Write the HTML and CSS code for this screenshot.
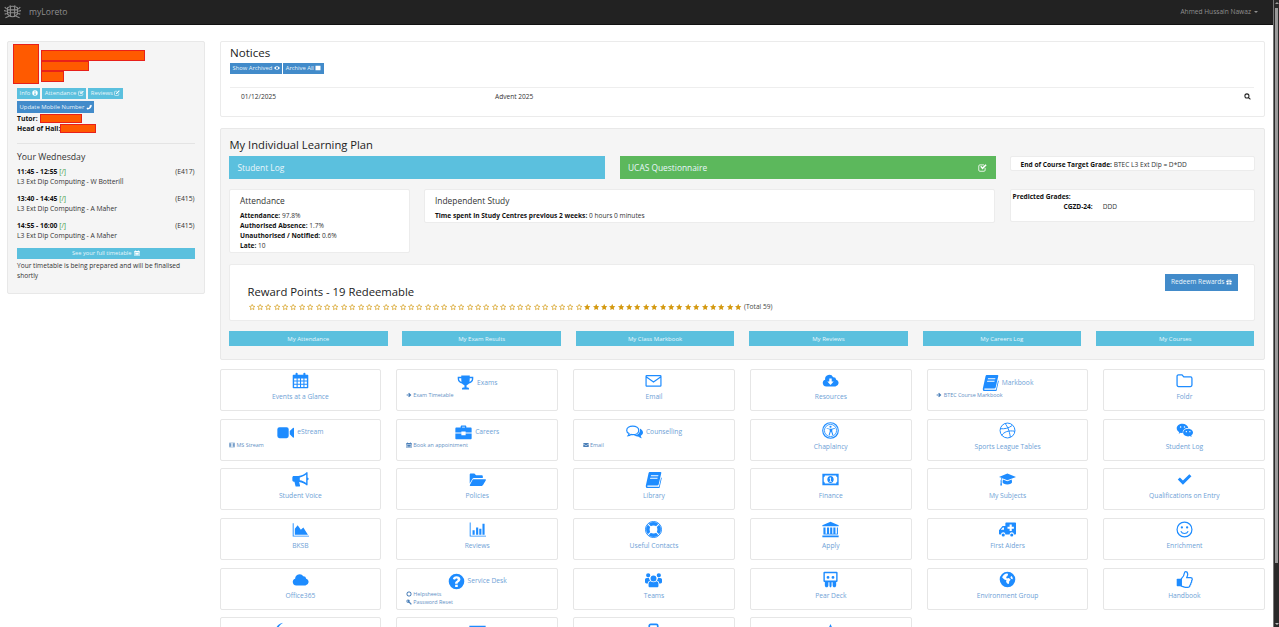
FILE: index.html
```html
<!DOCTYPE html>
<html lang="en">
<head>
<meta charset="utf-8">
<title>myLoreto</title>
<link rel="stylesheet" href="styles.css">
</head>
<body>
<svg class="sprite" aria-hidden="true">
<defs>
<symbol id="i-calendar" viewBox="0 0 24 24"><path fill="currentColor" fill-rule="evenodd" d="M2 4h3V2.5a1.5 1.5 0 0 1 3 0V4h8V2.500a1.500 1.500 0 0 1 3 0V4h3a1 1 0 0 1 1 1v17a1 1 0 0 1-1 1H2a1 1 0 0 1-1-1V5a1 1 0 0 1 1-1zM3 9v3h3.500V9zm5 0v3h3.300V9zm4.800 0v3h3.300V9zm4.800 0v3H21V9zM3 13.500v3h3.500v-3zm5 0v3h3.300v-3zm4.800 0v3h3.300v-3zm4.800 0v3H21v-3zM3 18v3h3.500v-3zm5 0v3h3.300v-3zm4.800 0v3h3.300v-3zm4.800 0v3H21v-3z"/></symbol>
<symbol id="i-trophy" viewBox="0 0 24 24"><path fill="currentColor" fill-rule="evenodd" d="M6 2h12v2h5v3c0 3.500-3 6-6 6.300-.8 1.200-2 2.100-3.500 2.500V19H15c1.100 0 2 .8 2 2v1H7v-1c0-1.200.9-2 2-2h1.500v-3.200C9 15.400 7.800 14.500 7 13.300 4 13 1 10.500 1 7V4h5zM3 6v1c0 2 1.500 3.600 3.500 4.100C6.200 10 6 8 6 6zm15 0c0 2-.2 4-.5 5.100C19.500 10.600 21 9 21 7V6z"/></symbol>
<symbol id="i-envelope" viewBox="0 0 24 24"><path fill="none" stroke="currentColor" stroke-width="1.700" d="M2.500 5h19a1 1 0 0 1 1 1v13a1 1 0 0 1-1 1h-19a1 1 0 0 1-1-1V6a1 1 0 0 1 1-1zM2 7l10 7 10-7"/></symbol>
<symbol id="i-cloud-down" viewBox="0 0 24 24"><path fill="currentColor" fill-rule="evenodd" d="M6 20.500a5 5 0 0 1-1.600-9.700A6 6 0 0 1 15.700 7.300 4 4 0 0 1 20 10.800a5 5 0 0 1-1 9.700zM10.300 9v4.500H7.500l4.500 5 4.500-5h-2.800V9z"/></symbol>
<symbol id="i-book" viewBox="0 0 24 24"><path fill="currentColor" fill-rule="evenodd" d="M7 1.500h15c.8 0 1.200.6 1 1.300L19.300 19c-.3 1-1 1.500-2 1.500H4c-.7 0-1 .4-1 .8s.4.900 1.200.900h15.500l3-13 1 .8-3 13c-.2.900-.9 1.500-1.800 1.500H4C2 24.500 .8 23 1.200 20.500L5 3c.2-.9 1-1.500 2-1.500zM8.500 6l-.4 1.500h10.500L19 6zm-1 3.500L7 11h10.500l.4-1.500z"/></symbol>
<symbol id="i-folder" viewBox="0 0 24 24"><path fill="none" stroke="currentColor" stroke-width="1.800" d="M3.500 4h5l2.500 3h9.500a2 2 0 0 1 2 2v9.500a2 2 0 0 1-2 2h-17a2 2 0 0 1-2-2v-12.500a2 2 0 0 1 2-2z"/></symbol>
<symbol id="i-video" viewBox="0 0 24 24"><path fill="currentColor" d="M3.500 4.500h10a3 3 0 0 1 3 3V17a3 3 0 0 1-3 3h-10a3 3 0 0 1-3-3V7.500a3 3 0 0 1 3-3zM18 10l4.500-4.500c.5-.5 1.500-.2 1.500.6v12.300c0 .8-1 1.100-1.500.6L18 14.500z"/></symbol>
<symbol id="i-briefcase" viewBox="0 0 24 24"><path fill="currentColor" fill-rule="evenodd" d="M8 5V3.500C8 2.700 8.700 2 9.500 2h5c.8 0 1.500.7 1.500 1.500V5h6c.9 0 1.500.7 1.500 1.500V12H15v-1.500H9V12H.5V6.500C.500 5.700 1.100 5 2 5zm2 0h4V4h-4zM.5 13.500H9V16h6v-2.500h8.500V20c0 .8-.7 1.500-1.500 1.500H2c-.9 0-1.500-.7-1.500-1.500z"/></symbol>
<symbol id="i-comments" viewBox="0 0 24 24"><path fill="none" stroke="currentColor" stroke-width="1.700" d="M9.500 3c4.700 0 8.500 2.500 8.500 6s-3.800 6-8.500 6c-.9 0-1.700-.1-2.500-.3-1.200.9-2.500 1.600-4 1.800.7-.9 1.200-1.900 1.300-3C2.200 12.400 1 10.800 1 9c0-3.500 3.800-6 8.500-6z"/><path fill="currentColor" d="M19.500 6.500C22 7.800 24 9.500 24 12c0 1.800-1.200 3.400-3.200 4.500.1 1.100.6 2.300 1.700 3.500-2.200-.2-4-1.200-5.300-2.400-2.500.3-4.700-.4-6.200-1.600 4.500.1 10-2.500 8.500-9.500z"/></symbol>
<symbol id="i-access" viewBox="0 0 24 24"><circle cx="12" cy="12" r="11" fill="none" stroke="currentColor" stroke-width="1.600"/><circle cx="12" cy="12" r="8.600" fill="none" stroke="currentColor" stroke-width="1.200"/><circle cx="12" cy="6.700" r="1.500" fill="currentColor"/><path fill="currentColor" d="M6 8.500l4.300 1h3.400l4.300-1 .3 1.200-3.800 1v2.800l1.500 5-1.200.4-1.800-5h-.6l-1.800 5-1.200-.4 1.500-5v-2.800l-3.800-1z"/></symbol>
<symbol id="i-ball" viewBox="0 0 24 24"><g fill="none" stroke="currentColor" stroke-width="1.400"><circle cx="12" cy="12" r="10.500"/><path d="M8.500 2.200c3.500 4 6 9.500 7.500 19M2 9.500c6 .5 12-.8 16.500-4.500M3.800 19C7 14 13 11.500 22.400 13"/></g></symbol>
<symbol id="i-wechat" viewBox="0 0 24 24"><path fill="currentColor" fill-rule="evenodd" d="M9 2.500c4.200 0 7.700 2.500 8.300 5.800C13 8.200 9 11 9.500 15.500c-1 0-1.800-.1-2.700-.4l-3 1.600.8-2.500C2.500 13 1 11 1 8.700 1 5.300 4.600 2.500 9 2.500zM6.500 6a1.100 1.100 0 1 0 0 2.200 1.100 1.100 0 0 0 0-2.200zm5.500 0a1.100 1.100 0 1 0 0 2.200A1.100 1.100 0 0 0 12 6z"/><path fill="currentColor" fill-rule="evenodd" d="M17 9.500c3.800 0 7 2.400 7 5.300 0 1.700-1 3.100-2.500 4.200l.6 2.200-2.500-1.300c-.8.200-1.700.4-2.600.4-3.800 0-7-2.400-7-5.500s3.200-5.300 7-5.300zm-2.400 3.100a1 1 0 1 0 0 2 1 1 0 0 0 0-2zm5 0a1 1 0 1 0 0 2 1 1 0 0 0 0-2z"/></symbol>
<symbol id="i-bullhorn" viewBox="0 0 24 24"><path fill="currentColor" fill-rule="evenodd" d="M21 1.500c.6 0 1 .5 1 1V9c1 .3 1.500 1 1.500 2s-.5 1.700-1.500 2v6.500c0 .5-.4 1-1 1-3-2.700-7-4.500-11-5l1.300 5c.2.800-.2 1.500-1 1.500H6c-.6 0-1-.4-1.100-.9L3.500 15H2.500C1.400 15 .5 14 .5 13V9c0-1 .9-2 2-2H9c4.500 0 9-2.500 12-5.500zM20 5c-2.500 2-5.800 3.500-9 4v4c3.200.4 6.500 2 9 4z"/></symbol>
<symbol id="i-folder-open" viewBox="0 0 24 24"><path fill="currentColor" d="M1 17.500V5c0-.8.7-1.500 1.500-1.500h5L10 6h8c.8 0 1.500.7 1.500 1.500V10H7c-1 0-1.800.5-2.300 1.300zM6.200 11.500H23c.8 0 1.200.7.800 1.400l-4 7c-.4.700-1.100 1.100-1.800 1.100H2c-.8 0-1.200-.8-.8-1.400l3.700-7c.3-.7.800-1.100 1.300-1.100z"/></symbol>
<symbol id="i-money" viewBox="0 0 24 24"><path fill="currentColor" fill-rule="evenodd" d="M.5 4h23v16H.5zM4 6.500c0 1.400-.8 2.200-1.500 2.200v6.600c.7 0 1.500.8 1.500 2.200h16c0-1.400.8-2.200 1.500-2.200V8.700c-.7 0-1.500-.8-1.500-2.200zM12 7c2.800 0 4.500 2.300 4.500 5s-1.700 5-4.500 5-4.500-2.300-4.500-5 1.700-5 4.500-5zm-1.500 2.800v1l1-.2v3.400h-1v1h3.200v-1h-1V9h-1z"/></symbol>
<symbol id="i-cap" viewBox="0 0 24 24"><path fill="currentColor" d="M11.800 3.500L24 8.300l-12.200 4.800L4.500 10.200c-.6.800-1 2-1 3.100.4.200.6.500.6.900 0 .3-.2.600-.4.800l.6 5.500H1.800l.6-5.500c-.3-.2-.4-.5-.4-.8 0-.4.200-.8.600-1 0-1.400.4-2.700 1-3.600L0 8.300zM5.500 12l6.300 2.400 6.200-2.400.4 4c0 1.500-3 3-6.600 3S5 17.500 5 16z"/></symbol>
<symbol id="i-check" viewBox="0 0 24 24"><path fill="currentColor" d="M2.500 12l3-3 4.300 4.300L18.800 4.500l3 3L9.800 19.500z"/></symbol>
<symbol id="i-area" viewBox="0 0 24 24"><path fill="currentColor" d="M1 3h1.300v17.700H24V22H1zM4 19.500V11l4-5 4.500 6.500L16 9l6.500 10.500z"/></symbol>
<symbol id="i-bars" viewBox="0 0 24 24"><path fill="currentColor" d="M1 2h1.300v18.700H24V22H1zM5 13h3v6.500H5zM10 9h3v10.500h-3zM14.500 11h3v8.500h-3zM19 4h3v15.500h-3z"/></symbol>
<symbol id="i-ring" viewBox="0 0 24 24"><circle cx="12" cy="12" r="8" fill="none" stroke="currentColor" stroke-width="5"/><path stroke="#fff" stroke-width="1.500" d="M4.300 4.300l4.200 4.200M19.700 4.300l-4.200 4.200M4.300 19.700l4.200-4.200M19.700 19.700l-4.200-4.200"/><circle cx="12" cy="12" r="11.300" fill="none" stroke="currentColor" stroke-width="1.400"/></symbol>
<symbol id="i-bank" viewBox="0 0 24 24"><path fill="currentColor" d="M12 1l11.500 5v1.500h-23V6zM2 9h3v9H7V9h3v9h1.500V9h3v9h1.500V9h3v9h2V9h1.500v10H2zM.5 20.500h23V23H.5z"/></symbol>
<symbol id="i-ambulance" viewBox="0 0 24 24"><path fill="currentColor" fill-rule="evenodd" d="M10 2h13c.6 0 1 .4 1 1v15c0 .6-.4 1-1 1h-2c0-1.700-1.300-3-3-3s-3 1.300-3 3H9c0-1.700-1.300-3-3-3s-3 1.300-3 3H1c-.6 0-1-.4-1-1v-5l5-6h4V3c0-.6.400-1 1-1zM15 5v3h-3v3h3v3h3v-3h3V8h-3V5zM5.500 9L2.500 12.500H7V9zM6 17.500a2.200 2.200 0 1 1 0 4.400 2.200 2.200 0 0 1 0-4.400zm12 0a2.200 2.200 0 1 1 0 4.400 2.200 2.200 0 0 1 0-4.400z"/></symbol>
<symbol id="i-smile" viewBox="0 0 24 24"><circle cx="12" cy="12" r="10.500" fill="none" stroke="currentColor" stroke-width="1.700"/><circle cx="8.300" cy="9" r="1.600" fill="currentColor"/><circle cx="15.700" cy="9" r="1.600" fill="currentColor"/><path fill="none" stroke="currentColor" stroke-width="1.600" d="M6.800 14.500c1 2 3 3.200 5.200 3.200s4.200-1.200 5.200-3.200"/></symbol>
<symbol id="i-cloud" viewBox="0 0 24 24"><path fill="currentColor" d="M6 20.500a5 5 0 0 1-1.600-9.700A6.500 6.500 0 0 1 16 7.300a4 4 0 0 1 4 3.500 5 5 0 0 1-1 9.700z"/></symbol>
<symbol id="i-question" viewBox="0 0 24 24"><path fill="currentColor" fill-rule="evenodd" d="M12 1a11 11 0 1 1 0 22 11 11 0 0 1 0-22zm-1.900 15.500v3.300h3.700v-3.300zM12 4.500c-3 0-4.700 1.500-5.200 4l3.100 1.100c.3-1.200 1-2 2-2 1.100 0 1.800.7 1.800 1.500 0 1-.8 1.500-1.800 2.200-1.200.9-1.900 1.800-1.900 3.300v.4h3.600c0-1 .4-1.400 1.500-2.200 1.400-1 2.400-2.100 2.400-3.900 0-2.600-2.300-4.400-5.500-4.400z"/></symbol>
<symbol id="i-users" viewBox="0 0 24 24"><path fill="currentColor" d="M12 6.500a4.200 4.200 0 1 1 0 8.400 4.200 4.200 0 0 1 0-8.400zM4.500 3a3 3 0 1 1 0 6 3 3 0 0 1 0-6zM19.500 3a3 3 0 1 1 0 6 3 3 0 0 1 0-6zM0 12.500c0-1.500 1-2.500 2.500-2.500h3c.3 1.500 1 2.700 2 3.500-2.200.5-3.500 2-3.500 4H2c-1.200 0-2-.7-2-1.800zM24 12.500c0-1.500-1-2.500-2.500-2.500h-3c-.3 1.500-1 2.700-2 3.500 2.200.5 3.500 2 3.500 4h2c1.200 0 2-.7 2-1.800zM8 14.500c1 1 2.400 1.500 4 1.500s3-.5 4-1.500c1.800.3 3 1.700 3 3.500v3c0 1.200-.9 2-2 2H7c-1.100 0-2-.8-2-2v-3c0-1.800 1.200-3.200 3-3.500z"/></symbol>
<symbol id="i-pear" viewBox="0 0 24 24"><path fill="currentColor" fill-rule="evenodd" d="M3.500 1h17A1.500 1.500 0 0 1 22 2.500V14a1.500 1.500 0 0 1-1.500 1.500H20V20c0 1.700-1 3-2.500 3s-2.500-1.300-2.500-3V16h-1.500v4c0 1.700-.5 3-1.500 3s-1.500-1.300-1.500-3v-4H9v4c0 1.700-1 3-2.500 3S4 21.700 4 20v-4.500h-.5A1.500 1.500 0 0 1 2 14V2.500A1.500 1.500 0 0 1 3.500 1zM4 3v10.500h16V3zm4.500 4a2 2 0 1 1 0 4 2 2 0 0 1 0-4zm7 0a2 2 0 1 1 0 4 2 2 0 0 1 0-4z"/></symbol>
<symbol id="i-globe" viewBox="0 0 24 24"><path fill="currentColor" d="M12 1a11 11 0 1 1 0 22 11 11 0 0 1 0-22zM8 4.500c-1.500 1-3 2.700-3.500 4.500l3 3 3 1-.5 2.500 2.500 3 1.500-.5.500-3.500 2-2-2.500-2.500-3 .5-1-2 2-1.500 1-3-3-.5zM18 7l-2 1.500 1 2.500 2.500.5c0-1.500-.5-3.200-1.500-4.500z"/></symbol>
<symbol id="i-thumb" viewBox="0 0 24 24"><path fill="none" stroke="currentColor" stroke-width="1.800" stroke-linejoin="round" d="M7.500 11c2.500-2 4-5 4.500-8.500.1-.8.800-1.500 1.500-1.500 2 0 3 2 3 4 0 1.500-.7 3-1.500 4.500h5.500c1.500 0 2.500 1 2.500 2.300 0 .9-.5 1.600-1 2 .4 1.300 0 2.500-1 3.200.2 1.200-.3 2.300-1.300 3-.1 1.700-1.200 3-3.200 3h-3c-3 0-4-1.500-6-1.500z"/><rect x="1" y="11" width="6.500" height="10.500" rx="1" fill="currentColor"/></symbol>
<symbol id="i-arrow" viewBox="0 0 24 24"><path fill="currentColor" d="M12 3l9.500 9-9.500 9-3-3 4-4H2.500v-4H13L9 6z"/></symbol>
<symbol id="i-film" viewBox="0 0 24 24"><path fill="currentColor" fill-rule="evenodd" d="M1 3h22v18H1zM3 5v3h3V5zm0 5v4h3v-4zm0 6v3h3v-3zM18 5v3h3V5zm0 5v4h3v-4zm0 6v3h3v-3zM8 5v6h8V5zm0 8v6h8v-6z"/></symbol>
<symbol id="i-mail" viewBox="0 0 24 24"><path fill="currentColor" d="M1 6a2 2 0 0 1 2-2h18a2 2 0 0 1 2 2v.5l-11 7-11-7zM1 9l11 7 11-7v9a2 2 0 0 1-2 2H3a2 2 0 0 1-2-2z"/></symbol>
<symbol id="i-cal-s" viewBox="0 0 24 24"><path fill="currentColor" fill-rule="evenodd" d="M2 4h3V2h3v2h8V2h3v2h3a1 1 0 0 1 1 1v17a1 1 0 0 1-1 1H2a1 1 0 0 1-1-1V5a1 1 0 0 1 1-1zm1 6v11h18V10z"/><path fill="currentColor" d="M5 12h14v7H5z"/></symbol>
<symbol id="i-ring-s" viewBox="0 0 24 24"><circle cx="12" cy="12" r="8.500" fill="none" stroke="currentColor" stroke-width="4"/><path stroke="currentColor" stroke-width="3" d="M4 4l4 4M20 4l-4 4M4 20l4-4M20 20l-4-4"/></symbol>
<symbol id="i-key" viewBox="0 0 24 24"><path fill="currentColor" fill-rule="evenodd" d="M8 2a6.500 6.500 0 0 1 6.200 8.500L22 18.300V22h-5v-3h-3v-3h-2.500l-1.400-1.300A6.500 6.500 0 1 1 8 2zM6 5.500a2 2 0 1 0 0 4 2 2 0 0 0 0-4z"/></symbol>
<symbol id="i-search" viewBox="0 0 24 24"><path fill="none" stroke="currentColor" stroke-width="3.500" d="M10 3a7 7 0 1 1 0 14 7 7 0 0 1 0-14zM15 15l7 7"/></symbol>
<symbol id="i-info" viewBox="0 0 24 24"><path fill="currentColor" fill-rule="evenodd" d="M12 1a11 11 0 1 1 0 22 11 11 0 0 1 0-22zM10 5v3.500h4V5zm-1 5.500V13h1.500v4H9v2.500h6V17h-1v-6.500z"/></symbol>
<symbol id="i-edit" viewBox="0 0 24 24"><path fill="none" stroke="currentColor" stroke-width="2.200" d="M19 13v6a3 3 0 0 1-3 3H5a3 3 0 0 1-3-3V8a3 3 0 0 1 3-3h7"/><path fill="currentColor" d="M20 1l3 3L11 16H8v-3z"/></symbol>
<symbol id="i-checkbox" viewBox="0 0 24 24"><path fill="none" stroke="currentColor" stroke-width="2.200" d="M19 13v6a3 3 0 0 1-3 3H5a3 3 0 0 1-3-3V8a3 3 0 0 1 3-3h11"/><path fill="currentColor" d="M6 10l2.500-2.500 3.500 3.500L20 3l3 3-11 11z"/></symbol>
<symbol id="i-phone" viewBox="0 0 24 24"><path fill="currentColor" d="M20 3l3 2c.5 8-8 17-18 17l-3-4 5-4 3 2c2-1 4-3 5-6l-2-2z"/></symbol>
<symbol id="i-moon" viewBox="0 0 24 24"><path fill="currentColor" d="M16 1c-7 1-11 6-11 12 0 5 3 9 7 10-3-3-5-7-4-12 .7-4 4-8 8-10z"/></symbol>
<symbol id="i-eye" viewBox="0 0 24 24"><path fill="currentColor" fill-rule="evenodd" d="M12 5c5 0 9 3 11.500 7-2.500 4-6.500 7-11.500 7S3 16 .5 12C3 8 7 5 12 5zm0 2.500a4.500 4.500 0 1 0 0 9 4.500 4.500 0 0 0 0-9z"/></symbol>
<symbol id="i-square" viewBox="0 0 24 24"><path fill="currentColor" d="M2 3h20v18H2z"/></symbol>
<symbol id="i-print" viewBox="0 0 24 24"><path fill="none" stroke="currentColor" stroke-width="2.400" d="M6 9V4a2 2 0 0 1 2-2h8a2 2 0 0 1 2 2v5"/><path fill="currentColor" d="M2 9h20v10H2z"/></symbol>
<symbol id="i-gift" viewBox="0 0 24 24"><path fill="currentColor" d="M1 7h9.500v5H1zM13.500 7H23v5h-9.500zM2.500 13.500h8V22h-8zM13.500 13.500h8V22h-8zM7.500 2c2 0 3.500 2 4.500 4 1-2 2.500-4 4.500-4a2 2 0 0 1 1 3.800H6.500A2 2 0 0 1 7.500 2z"/></symbol>
<symbol id="i-star" viewBox="0 0 24 24"><path fill="currentColor" d="M12 1.500l3.200 6.900 7.500.9-5.500 5.200 1.500 7.400L12 18.300l-6.700 3.600 1.500-7.400L1.300 9.300l7.500-.9z"/></symbol>
<symbol id="i-star-o" viewBox="0 0 24 24"><path fill="none" stroke="currentColor" stroke-width="2.300" d="M12 3.500l2.700 5.800 6.300.8-4.600 4.400 1.200 6.200-5.600-3.100-5.600 3.100 1.200-6.200L3 10.100l6.300-.8z"/></symbol>
</defs>
</svg>

<header class="navbar">
  <div class="brand">
    <svg class="crest" viewBox="0 0 24 22"><g fill="none" stroke="#8d8d8d" stroke-width="1.500"><path d="M5 5c4-3 10-3 14 0v9c-4 5-10 5-14 0z"/><path d="M9 4v14M15 4v14M5 8h14M5 12h14"/><path d="M1 4l3 3M0 9l4 1M1 14l3-1M23 4l-3 3M24 9l-4 1M23 14l-3-1M2 19l5-2M22 19l-5-2M8 2l2 1M16 2l-2 1"/></g></svg>
    <span>myLoreto</span>
  </div>
  <div class="user">Ahmed Hussain Nawaz <span class="caret"></span></div>
</header>

<div class="scroll-strip">
  <span class="arrow-up"></span>
  <span class="thumb"></span>
  <span class="arrow-down"></span>
</div>

<main class="page">
  <aside class="well side">
    <div class="who">
      <span class="mask mask-photo"></span>
      <div class="who-lines">
        <span class="mask mask-a"></span>
        <span class="mask mask-b"></span>
        <span class="mask mask-c"></span>
      </div>
    </div>
    <div class="side-indent">
      <div class="btn-row">
        <span class="btn info">Info <svg class="bi"><use href="#i-info"/></svg></span>
        <span class="btn info">Attendance <svg class="bi"><use href="#i-checkbox"/></svg></span>
        <span class="btn info">Reviews <svg class="bi"><use href="#i-edit"/></svg></span>
      </div>
      <div class="btn-row">
        <span class="btn primary">Update Mobile Number <svg class="bi"><use href="#i-phone"/></svg></span>
      </div>
      <div class="person"><b>Tutor:</b> <span class="mask mask-tutor"></span></div>
      <div class="person"><b>Head of Hall:</b><span class="mask mask-hall"></span></div>
      <hr class="rule">
      <h4 class="day">Your Wednesday</h4>
      <div class="lesson">
        <div class="lesson-top"><span><b>11:45 - 12:55</b> <em>[/]</em></span><span>(E417)</span></div>
        <div>L3 Ext Dip Computing - W Botterill</div>
      </div>
      <div class="lesson">
        <div class="lesson-top"><span><b>13:40 - 14:45</b> <em>[/]</em></span><span>(E415)</span></div>
        <div>L3 Ext Dip Computing - A Maher</div>
      </div>
      <div class="lesson">
        <div class="lesson-top"><span><b>14:55 - 16:00</b> <em>[/]</em></span><span>(E415)</span></div>
        <div>L3 Ext Dip Computing - A Maher</div>
      </div>
      <div class="timetable-btn">See your full timetable <svg class="bi"><use href="#i-cal-s"/></svg></div>
      <p class="note">Your timetable is being prepared and will be finalised shortly</p>
    </div>
  </aside>

  <div class="content">
    <section class="notices">
      <h3 class="title">Notices</h3>
      <div class="btn-row tight">
        <span class="btn primary">Show Archived <svg class="bi"><use href="#i-eye"/></svg></span>
        <span class="btn primary">Archive All <svg class="bi"><use href="#i-square"/></svg></span>
      </div>
      <div class="notice-row">
        <span class="n-date">01/12/2025</span>
        <span class="n-name">Advent 2025</span>
        <svg class="n-search"><use href="#i-search"/></svg>
      </div>
    </section>

    <section class="well ilp">
      <h3 class="title ilp-title">My Individual Learning Plan</h3>
      <div class="ilp-grid">
        <div class="bar info">Student Log</div>
        <div class="bar success">UCAS Questionnaire <svg class="bar-i"><use href="#i-checkbox"/></svg></div>
        <div class="card target"><b>End of Course Target Grade:</b> BTEC L3 Ext Dip = D*DD</div>
      </div>
      <div class="ilp-grid second">
        <div class="card att">
          <h4 class="card-title">Attendance</h4>
          <div><b>Attendance:</b> 97.8%</div>
          <div><b>Authorised Absence:</b> 1.7%</div>
          <div><b>Unauthorised / Notified:</b> 0.6%</div>
          <div><b>Late:</b> 10</div>
        </div>
        <div class="card study">
          <h4 class="card-title">Independent Study</h4>
          <div><b>Time spent in Study Centres previous 2 weeks:</b> 0 hours 0 minutes</div>
        </div>
        <div class="card pred">
          <div><b>Predicted Grades:</b></div>
          <div class="pred-row"><b>CGZD-24:</b><span>DDD</span></div>
        </div>
      </div>
      <div class="card reward">
        <div class="reward-main">
          <h3 class="reward-title">Reward Points - 19 Redeemable</h3>
          <div class="stars">
            <svg class="s"><use href="#i-star-o"/></svg><svg class="s"><use href="#i-star-o"/></svg><svg class="s"><use href="#i-star-o"/></svg><svg class="s"><use href="#i-star-o"/></svg><svg class="s"><use href="#i-star-o"/></svg><svg class="s"><use href="#i-star-o"/></svg><svg class="s"><use href="#i-star-o"/></svg><svg class="s"><use href="#i-star-o"/></svg><svg class="s"><use href="#i-star-o"/></svg><svg class="s"><use href="#i-star-o"/></svg>
            <svg class="s"><use href="#i-star-o"/></svg><svg class="s"><use href="#i-star-o"/></svg><svg class="s"><use href="#i-star-o"/></svg><svg class="s"><use href="#i-star-o"/></svg><svg class="s"><use href="#i-star-o"/></svg><svg class="s"><use href="#i-star-o"/></svg><svg class="s"><use href="#i-star-o"/></svg><svg class="s"><use href="#i-star-o"/></svg><svg class="s"><use href="#i-star-o"/></svg><svg class="s"><use href="#i-star-o"/></svg>
            <svg class="s"><use href="#i-star-o"/></svg><svg class="s"><use href="#i-star-o"/></svg><svg class="s"><use href="#i-star-o"/></svg><svg class="s"><use href="#i-star-o"/></svg><svg class="s"><use href="#i-star-o"/></svg><svg class="s"><use href="#i-star-o"/></svg><svg class="s"><use href="#i-star-o"/></svg><svg class="s"><use href="#i-star-o"/></svg><svg class="s"><use href="#i-star-o"/></svg><svg class="s"><use href="#i-star-o"/></svg>
            <svg class="s"><use href="#i-star-o"/></svg><svg class="s"><use href="#i-star-o"/></svg><svg class="s"><use href="#i-star-o"/></svg><svg class="s"><use href="#i-star-o"/></svg><svg class="s"><use href="#i-star-o"/></svg><svg class="s"><use href="#i-star-o"/></svg><svg class="s"><use href="#i-star-o"/></svg><svg class="s"><use href="#i-star-o"/></svg><svg class="s"><use href="#i-star-o"/></svg><svg class="s"><use href="#i-star-o"/></svg>
            <svg class="s"><use href="#i-star"/></svg><svg class="s"><use href="#i-star"/></svg><svg class="s"><use href="#i-star"/></svg><svg class="s"><use href="#i-star"/></svg><svg class="s"><use href="#i-star"/></svg><svg class="s"><use href="#i-star"/></svg><svg class="s"><use href="#i-star"/></svg><svg class="s"><use href="#i-star"/></svg><svg class="s"><use href="#i-star"/></svg><svg class="s"><use href="#i-star"/></svg>
            <svg class="s"><use href="#i-star"/></svg><svg class="s"><use href="#i-star"/></svg><svg class="s"><use href="#i-star"/></svg><svg class="s"><use href="#i-star"/></svg><svg class="s"><use href="#i-star"/></svg><svg class="s"><use href="#i-star"/></svg><svg class="s"><use href="#i-star"/></svg><svg class="s"><use href="#i-star"/></svg><svg class="s"><use href="#i-star"/></svg>
            <span class="total">(Total 59)</span>
          </div>
        </div>
        <span class="btn primary redeem">Redeem Rewards <svg class="bi"><use href="#i-gift"/></svg></span>
      </div>
      <div class="my-links">
        <span class="my">My Attendance</span>
        <span class="my">My Exam Results</span>
        <span class="my">My Class Markbook</span>
        <span class="my">My Reviews</span>
        <span class="my">My Careers Log</span>
        <span class="my">My Courses</span>
      </div>
    </section>

    <section class="tiles">
      <a class="tile"><div class="tile-c"><svg class="ti"><use href="#i-calendar"/></svg><span>Events at a Glance</span></div></a>
      <a class="tile top"><div class="tile-h"><svg class="ti"><use href="#i-trophy"/></svg><span>Exams</span></div><div class="sub"><svg class="si"><use href="#i-arrow"/></svg>Exam Timetable</div></a>
      <a class="tile"><div class="tile-c"><svg class="ti"><use href="#i-envelope"/></svg><span>Email</span></div></a>
      <a class="tile"><div class="tile-c"><svg class="ti"><use href="#i-cloud-down"/></svg><span>Resources</span></div></a>
      <a class="tile top"><div class="tile-h"><svg class="ti"><use href="#i-book"/></svg><span>Markbook</span></div><div class="sub"><svg class="si"><use href="#i-arrow"/></svg>BTEC Course Markbook</div></a>
      <a class="tile"><div class="tile-c"><svg class="ti"><use href="#i-folder"/></svg><span>Foldr</span></div></a>

      <a class="tile top"><div class="tile-h"><svg class="ti"><use href="#i-video"/></svg><span>eStream</span></div><div class="sub"><svg class="si"><use href="#i-film"/></svg>MS Stream</div></a>
      <a class="tile top"><div class="tile-h"><svg class="ti"><use href="#i-briefcase"/></svg><span>Careers</span></div><div class="sub"><svg class="si"><use href="#i-cal-s"/></svg>Book an appointment</div></a>
      <a class="tile top"><div class="tile-h"><svg class="ti"><use href="#i-comments"/></svg><span>Counselling</span></div><div class="sub"><svg class="si"><use href="#i-mail"/></svg>Email</div></a>
      <a class="tile"><div class="tile-c"><svg class="ti"><use href="#i-access"/></svg><span>Chaplaincy</span></div></a>
      <a class="tile"><div class="tile-c"><svg class="ti"><use href="#i-ball"/></svg><span>Sports League Tables</span></div></a>
      <a class="tile"><div class="tile-c"><svg class="ti"><use href="#i-wechat"/></svg><span>Student Log</span></div></a>

      <a class="tile"><div class="tile-c"><svg class="ti"><use href="#i-bullhorn"/></svg><span>Student Voice</span></div></a>
      <a class="tile"><div class="tile-c"><svg class="ti"><use href="#i-folder-open"/></svg><span>Policies</span></div></a>
      <a class="tile"><div class="tile-c"><svg class="ti"><use href="#i-book"/></svg><span>Library</span></div></a>
      <a class="tile"><div class="tile-c"><svg class="ti"><use href="#i-money"/></svg><span>Finance</span></div></a>
      <a class="tile"><div class="tile-c"><svg class="ti"><use href="#i-cap"/></svg><span>My Subjects</span></div></a>
      <a class="tile"><div class="tile-c"><svg class="ti"><use href="#i-check"/></svg><span>Qualifications on Entry</span></div></a>

      <a class="tile"><div class="tile-c"><svg class="ti"><use href="#i-area"/></svg><span>BKSB</span></div></a>
      <a class="tile"><div class="tile-c"><svg class="ti"><use href="#i-bars"/></svg><span>Reviews</span></div></a>
      <a class="tile"><div class="tile-c"><svg class="ti"><use href="#i-ring"/></svg><span>Useful Contacts</span></div></a>
      <a class="tile"><div class="tile-c"><svg class="ti"><use href="#i-bank"/></svg><span>Apply</span></div></a>
      <a class="tile"><div class="tile-c"><svg class="ti"><use href="#i-ambulance"/></svg><span>First Aiders</span></div></a>
      <a class="tile"><div class="tile-c"><svg class="ti"><use href="#i-smile"/></svg><span>Enrichment</span></div></a>

      <a class="tile"><div class="tile-c"><svg class="ti"><use href="#i-cloud"/></svg><span>Office365</span></div></a>
      <a class="tile top"><div class="tile-h"><svg class="ti"><use href="#i-question"/></svg><span>Service Desk</span></div><div class="sub"><svg class="si"><use href="#i-ring-s"/></svg>Helpsheets</div><div class="sub"><svg class="si"><use href="#i-key"/></svg>Password Reset</div></a>
      <a class="tile"><div class="tile-c"><svg class="ti"><use href="#i-users"/></svg><span>Teams</span></div></a>
      <a class="tile"><div class="tile-c"><svg class="ti"><use href="#i-pear"/></svg><span>Pear Deck</span></div></a>
      <a class="tile"><div class="tile-c"><svg class="ti"><use href="#i-globe"/></svg><span>Environment Group</span></div></a>
      <a class="tile"><div class="tile-c"><svg class="ti"><use href="#i-thumb"/></svg><span>Handbook</span></div></a>

      <a class="tile"><div class="tile-c"><svg class="ti ti-left"><use href="#i-moon"/></svg></div></a>
      <a class="tile"><div class="tile-c"><svg class="ti ti-low"><use href="#i-money"/></svg></div></a>
      <a class="tile"><div class="tile-c"><svg class="ti ti-low"><use href="#i-print"/></svg></div></a>
      <a class="tile"><div class="tile-c"><svg class="ti ti-low"><use href="#i-star"/></svg></div></a>
    </section>
  </div>
</main>
</body>
</html>
```

FILE: styles.css
```css
* { box-sizing: border-box; }
html, body { height: 627px; overflow: hidden; }
body {
  margin: 0;
  width: 1279px;
  background: #fff;
  color: #333;
  font-family: "Open Sans", "Noto Sans", sans-serif;
  font-size: 6.600px;
  line-height: 10px;
  position: relative;
}
.sprite { width: 0; height: 0; position: absolute; }

.navbar {
  height: 24.500px;
  background: #222;
  border-bottom: 1px solid #111;
  display: flex;
  justify-content: space-between;
  align-items: center;
  padding: 0 21px 0 4px;
  color: #8f8f8f;
}
.brand { display: flex; align-items: center; gap: 8px; font-size: 8.600px; }
.crest { width: 17px; height: 16px; }
.user { font-size: 6.600px; display: flex; align-items: center; gap: 3px; }
.caret { width: 0; height: 0; border: 2px solid transparent; border-top-color: #8f8f8f; border-bottom: 0; }

.scroll-strip {
  position: absolute;
  right: 0; top: 0; bottom: 0;
  width: 6px;
  background: #2a2a2a;
  border-left: 1px solid #777;
  display: flex;
  flex-direction: column;
  align-items: center;
  padding: 2px 0;
}
.thumb { width: 3.500px; height: 555px; margin-top: 4px; background: #9a9a9a; }
.arrow-up, .arrow-down { width: 0; height: 0; border: 2px solid transparent; }
.arrow-up { border-bottom-color: #9f9f9f; border-top: 0; }
.arrow-down { border-top-color: #bdbdbd; border-bottom: 0; margin-top: auto; }

.page {
  display: flex;
  align-items: flex-start;
  gap: 15px;
  padding: 16px 0 0 7px;
  width: 1264.500px;
}
.well {
  background: #f5f5f5;
  border: 1px solid #e8e8e8;
  border-radius: 2px;
}
.side { width: 197.500px; height: 253.500px; flex: none; padding: 2px 5px 0; }
.who { display: flex; gap: 1.500px; height: 40px; }
.who-lines { display: flex; flex-direction: column; padding-top: 6px; }
.mask { display: block; background: #ff5a00; border: 1px solid #e8201a; }
.mask-photo { width: 26px; height: 40px; }
.mask-a { width: 104px; height: 11.500px; }
.mask-b { width: 48px; height: 10px; }
.mask-c { width: 23px; height: 11px; }
.side-indent { padding: 4px 4px 0 4px; }
.btn-row { display: flex; gap: 2px; margin-bottom: 2px; }
.btn {
  display: inline-flex;
  align-items: center;
  gap: 1.500px;
  height: 11.500px;
  padding: 0 2.500px;
  color: #eaf6fb;
  font-size: 5.900px;
  white-space: nowrap;
}
.info { background: #5bc0de; }
.primary { background: #428bca; }
.success { background: #5cb85c; }
.bi { width: 6px; height: 6px; color: #fff; flex: none; }
.person { display: flex; align-items: center; height: 10px; gap: 2px; color: #111; font-size: 6.800px; }
.person b { font-weight: 700; }
.btn-row + .person { margin-top: -1px; }
.mask-tutor { width: 42px; height: 9px; }
.mask-hall { width: 36px; height: 9px; margin-left: -2px; }
.rule { border: 0; border-top: 1px solid #e4e4e4; margin: 9.500px 0 7px; }
.day { font-weight: 400; font-size: 8.700px; line-height: 12px; margin: 0 0 3.500px; color: #333; }
.lesson { margin-bottom: 7px; font-size: 6.750px; }
.lesson-top { display: flex; justify-content: space-between; }
.lesson b { color: #111; }
.lesson em { font-style: normal; color: #3c9a3c; }
.timetable-btn {
  background: #5bc0de;
  color: #e8f6fb;
  font-size: 5.700px;
  height: 11.500px;
  margin-top: 6px;
  display: flex;
  align-items: center;
  justify-content: center;
  gap: 2px;
}
.note { margin: 2px 0 0; }

.content { width: 1045px; flex: none; }
.notices {
  border: 1px solid #ebebeb;
  border-radius: 2px;
  height: 76.500px;
  padding: 3px 9.500px 0;
}
.title { font-weight: 400; font-size: 11.600px; line-height: 15px; margin: 0 0 3px; color: #222; }
.tight { gap: 1px; margin-bottom: 0; }
.notices .btn { font-size: 5.800px; }
.notice-row {
  margin-top: 13px;
  border-top: 1px solid #eee;
  display: flex;
  align-items: center;
  height: 18px;
  padding: 0 3px 0 11px;
}
.n-date { width: 254px; }
.n-search { width: 7px; height: 7px; margin-left: auto; color: #222; }

.ilp { margin-top: 10.500px; height: 232px; padding: 8.500px 8.500px 0 8.500px; }
.ilp-title { font-size: 11.200px; margin: 0 0 4px; padding-left: .5px; }
.ilp-grid { display: grid; grid-template-columns: 376px 376px 245px; column-gap: 14.500px; }
.bar {
  height: 23px;
  color: #e9f6fb;
  font-size: 8.400px;
  display: flex;
  align-items: center;
  justify-content: space-between;
  padding: 0 8.500px;
}
.bar-i { width: 9px; height: 9px; color: #fff; }
.card {
  background: #fff;
  border: 1px solid #ececec;
  border-radius: 2px;
}
.target { height: 15px; padding: 2.500px 0 0 9.500px; }
.target b, .pred b, .att b, .study b { color: #111; }
.second { margin-top: 9.500px; align-items: start; grid-template-columns: 180.500px 571px 245px; }
.card-title { font-weight: 400; font-size: 8.400px; line-height: 12px; margin: 0 0 4px; color: #333; }
.att { height: 64.500px; padding: 5px 10px 0; }
.study { height: 34px; padding: 5px 10px 0; }
.pred { height: 33.500px; padding: 2px 2px 0; }
.pred-row { display: flex; gap: 10px; padding-left: 51px; }
.reward {
  margin-top: 10.500px;
  height: 57.500px;
  display: flex;
  justify-content: space-between;
  padding: 19px 16px 0 17.500px;
}
.reward-title { font-weight: 400; font-size: 11.300px; line-height: 15px; margin: 0 0 3px; color: #222; }
.stars { display: flex; align-items: center; color: #d49a12; }
.s { width: 8.400px; height: 8px; flex: none; padding: 0 .6px; }
.total { margin-left: 1.500px; color: #444; }
.redeem { height: 17.500px; padding: 0 6px; font-size: 6.600px; margin-top: -10px; }
.my-links {
  margin-top: 10px;
  display: grid;
  grid-template-columns: repeat(6, 158.500px);
  column-gap: 14.900px;
}
.my {
  background: #5bc0de;
  color: #e9f6fb;
  height: 15px;
  font-size: 6px;
  display: flex;
  align-items: center;
  justify-content: center;
}

.tiles {
  margin-top: 9.500px;
  display: grid;
  grid-template-columns: repeat(6, 161.800px);
  column-gap: 15px;
  grid-auto-rows: 42px;
  row-gap: 7.700px;
}
.tile {
  border: 1px solid #e6e6e6;
  border-radius: 2px;
  color: #6ea1d6;
  font-size: 6.700px;
  padding: 2px 8.500px 0;
  overflow: hidden;
}
.tile-c { display: flex; flex-direction: column; align-items: center; }
.tile-c span { line-height: 10px; margin-top: 3px; }
.tile-h { display: flex; justify-content: center; align-items: center; gap: 3px; height: 19px; margin-top: 1px; }
.ti { width: 17px; height: 17px; color: #1e8cff; flex: none; }
.ti-left { margin-right: 40px; margin-top: 2px; }
.ti-low { margin-top: 3px; }
.sub { display: flex; align-items: center; gap: 1.500px; font-size: 5.400px; line-height: 8px; color: #5f8fc4; }
.tile-h + .sub { margin-top: -1px; }
.si { width: 6px; height: 6px; color: #4a7fb8; flex: none; }
```
